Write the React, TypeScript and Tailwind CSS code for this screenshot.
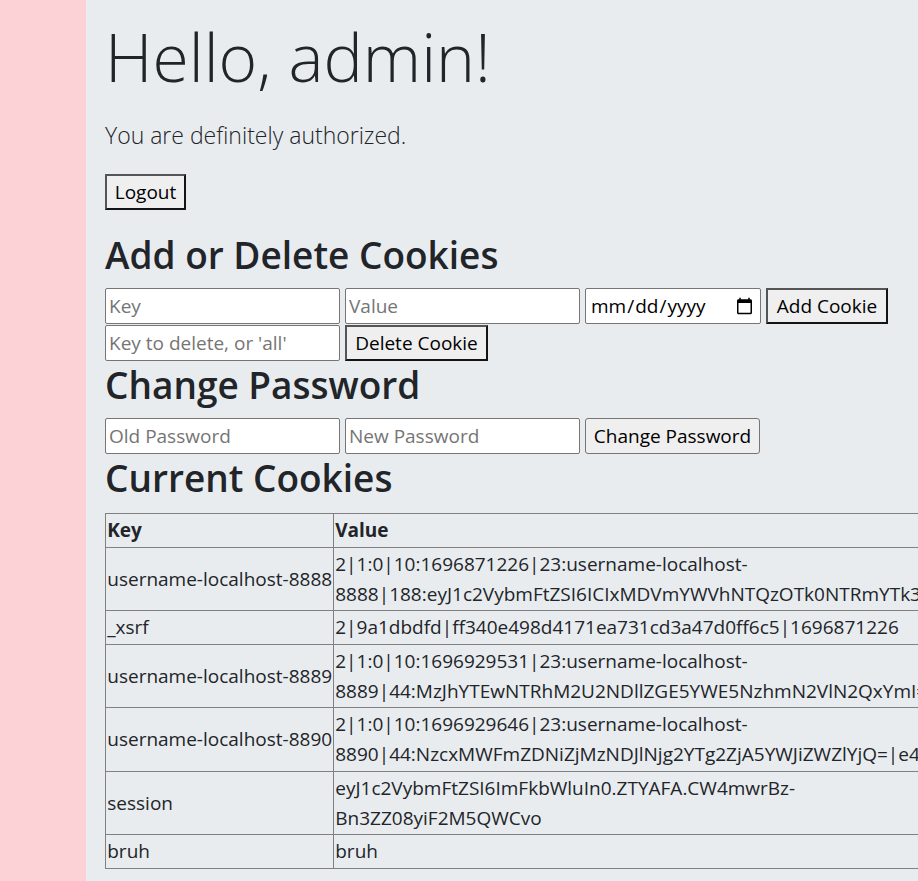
import React from "react";

const rows: { k: string; v: string[] }[] = [
  {
    k: "username-localhost-8888",
    v: [
      "2|1:0|10:1696871226|23:username-localhost-",
      "8888|188:eyJ1c2VybmFtZSI6ICIxMDVmYWVhNTQzOTk0NTRmYTk3YjM0ZGM1ZDQxNjQ1NyIsICJsb2dnZWRfaW4iOiB0cnVlfQ==|3f1a9c2e8b7d6a5c4b3e2d1f0a9b8c7d6e5f4a3b2c1d0e9f8a7b6c5d4e3f2a1b",
    ],
  },
  { k: "_xsrf", v: ["2|9a1dbdfd|ff340e498d4171ea731cd3a47d0ff6c5|1696871226"] },
  {
    k: "username-localhost-8889",
    v: [
      "2|1:0|10:1696929531|23:username-localhost-",
      "8889|44:MzJhYTEwNTRhM2U2NDllZGE5YWE5NzhmN2VlN2QxYmI=|6b1f0e2d3c4b5a69788796a5b4c3d2e1f0a9b8c7d6e5f4a3b2c1d0e9f8a7b6c5",
    ],
  },
  {
    k: "username-localhost-8890",
    v: [
      "2|1:0|10:1696929646|23:username-localhost-",
      "8890|44:NzcxMWFmZDNiZjMzNDJlNjg2YTg2ZjA5YWJiZWZlYjQ=|e4d3c2b1a0f9e8d7c6b5a4938271605f4e3d2c1b0a9f8e7d6c5b4a3928170605",
    ],
  },
  { k: "session", v: ["eyJ1c2VybmFtZSI6ImFkbWluIn0.ZTYAFA.CW4mwrBz-", "Bn3ZZ08yiF2M5QWCvo"] },
  { k: "bruh", v: ["bruh"] },
];

const inputCls =
  "h-[36px] w-[235px] shrink-0 rounded-[2px] border border-[#767676] bg-white px-[3px] text-[19px] text-black placeholder:text-[#757575] outline-none";
const darkBtn =
  "h-[36px] shrink-0 border-2 border-[#141414] border-t-[#555555] border-l-[#555555] bg-[#efefef] text-[19px] text-black";

export default function App() {
  return (
    <div className="flex min-h-screen w-full overflow-hidden font-['Open_Sans',sans-serif] text-[#212529]">
      <div className="w-[86px] shrink-0 bg-[#fcd2d7]" />
      <main className="min-w-0 flex-1 overflow-hidden bg-[#e9ecef] pl-[19px] pt-[14px]">
        <h1 className="mb-[19px] text-[66px] font-light leading-[84px]">Hello, admin!</h1>
        <p className="mb-[21px] text-[23px] font-light leading-[36px]">You are definitely authorized.</p>
        <button className={darkBtn + " mb-[22px] block h-[35px] w-[81px]"}>Logout</button>

        <h2 className="mb-[10px] text-[37px] font-semibold leading-[46px]">Add or Delete Cookies</h2>
        <div className="flex gap-x-[5px]">
          <input className={inputCls} placeholder="Key" />
          <input className={inputCls} placeholder="Value" />
          <input
            type="date"
            className="h-[36px] w-[176px] shrink-0 rounded-[2px] border border-[#767676] bg-white px-[4px] text-[19px] text-black outline-none"
          />
          <button className={darkBtn + " w-[122px]"}>Add Cookie</button>
        </div>
        <div className="mt-[1px] flex gap-x-[5px]">
          <input className={inputCls} placeholder="Key to delete, or 'all'" />
          <button className={darkBtn + " w-[143px]"}>Delete Cookie</button>
        </div>

        <h2 className="mb-[10px] mt-[1px] text-[37px] font-semibold leading-[46px]">Change Password</h2>
        <div className="flex gap-x-[5px]">
          <input className={inputCls} placeholder="Old Password" />
          <input className={inputCls} placeholder="New Password" />
          <button className="h-[36px] w-[175px] shrink-0 rounded-[3px] border border-[#767676] bg-[#efefef] text-[19px] text-black">
            Change Password
          </button>
        </div>

        <h2 className="mb-[12px] mt-[1px] text-[37px] font-semibold leading-[46px]">Current Cookies</h2>
        <table className="w-[1700px] table-fixed border-collapse border border-[#808080] text-[19px] leading-[30px]">
          <colgroup>
            <col className="w-[228px]" />
            <col />
          </colgroup>
          <thead>
            <tr>
              <th className="border border-[#808080] px-[1.25px] py-[1.25px] text-left font-bold">Key</th>
              <th className="border border-[#808080] px-[1.25px] py-[1.25px] text-left font-bold">Value</th>
            </tr>
          </thead>
          <tbody>
            {rows.map((r) => (
              <tr key={r.k}>
                <td className="whitespace-nowrap border border-[#808080] px-[1.25px] py-[1.25px] align-middle">{r.k}</td>
                <td className="whitespace-nowrap border border-[#808080] px-[1.25px] py-[1.25px] align-middle">
                  {r.v.map((line, i) => (
                    <div key={i}>{line}</div>
                  ))}
                </td>
              </tr>
            ))}
          </tbody>
        </table>
      </main>
    </div>
  );
}
